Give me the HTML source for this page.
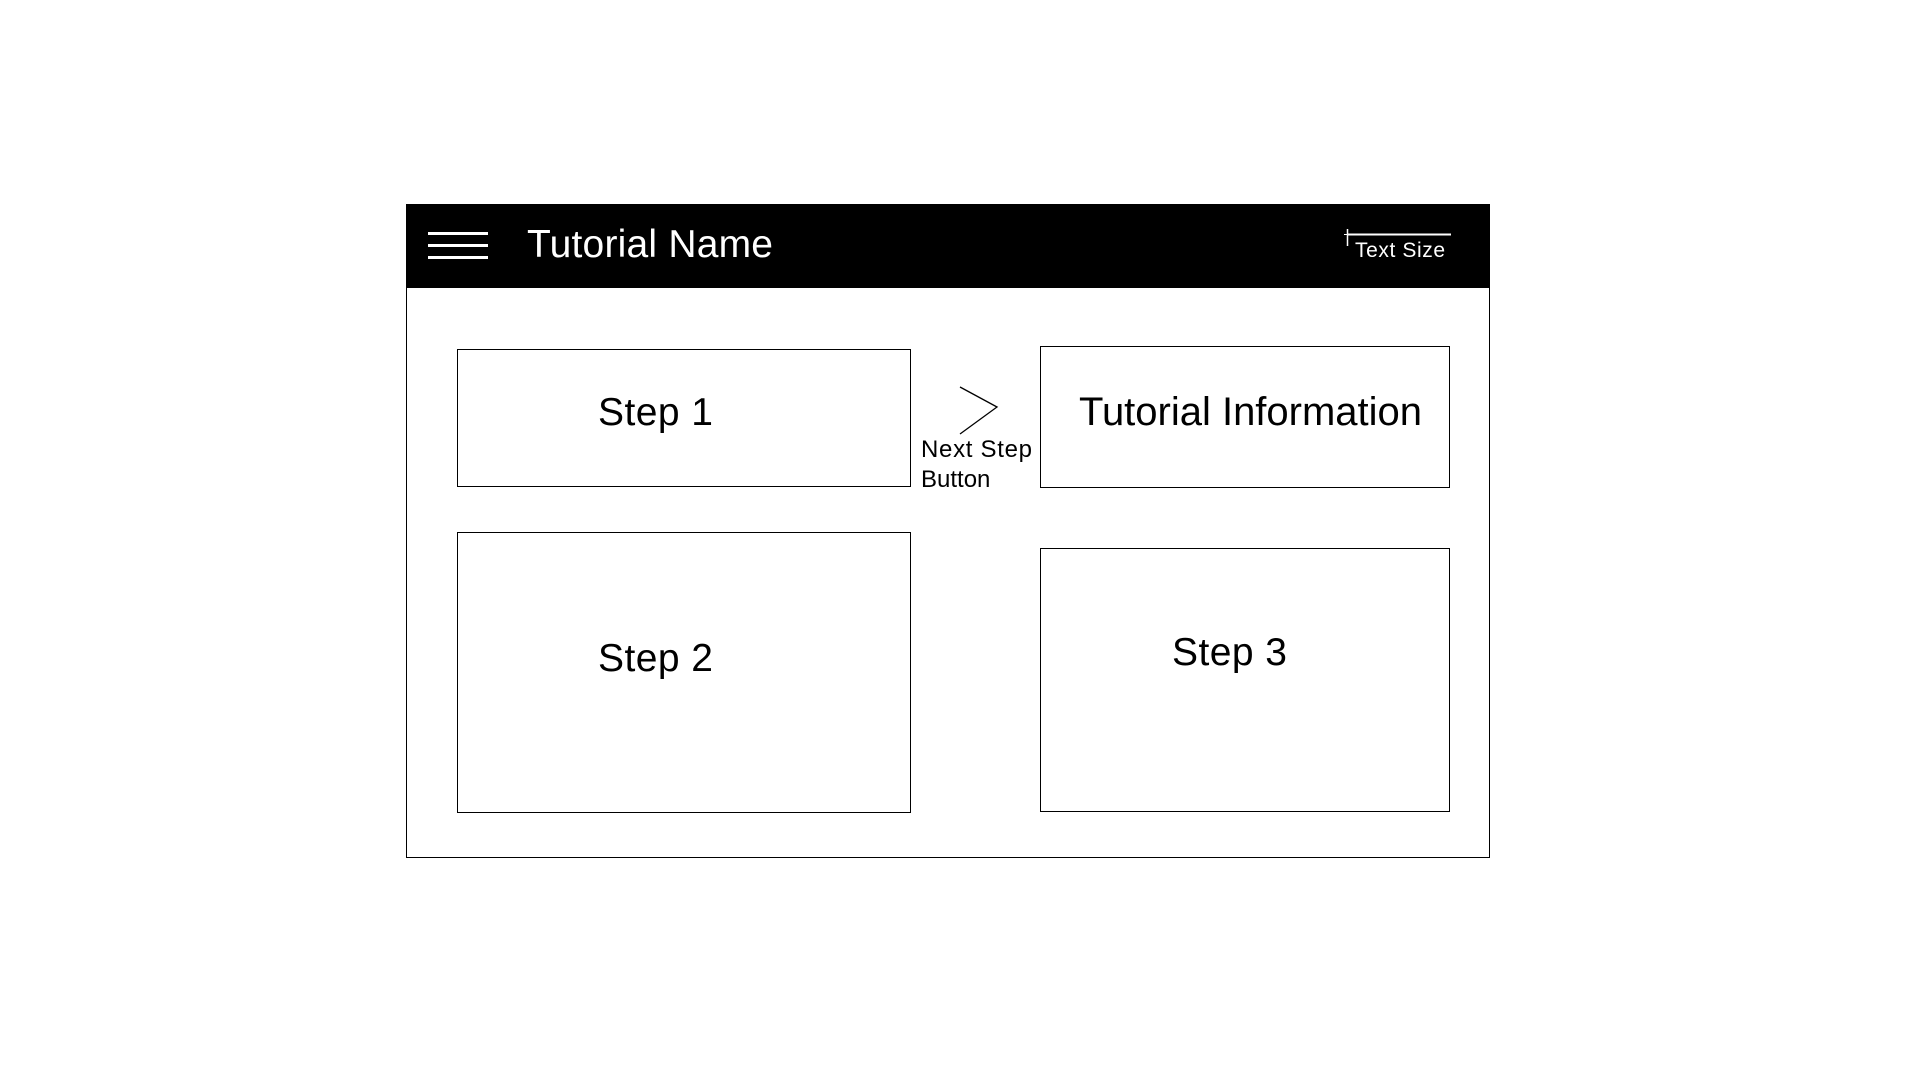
<!DOCTYPE html>
<html><head><meta charset="utf-8"><style>html,body{margin:0;padding:0;background:#fff;width:1920px;height:1080px;overflow:hidden}</style></head>
<body>
<svg width="1920" height="1080" xmlns="http://www.w3.org/2000/svg" font-family="Liberation Sans, Arial, sans-serif">
<rect x="406.5" y="204.5" width="1083" height="653" fill="#fff" stroke="#000" stroke-width="1"/>
<rect x="406" y="204" width="1084" height="84" fill="#000"/>
<rect x="428" y="232" width="60" height="3" fill="#fff"/>
<rect x="428" y="244" width="60" height="3" fill="#fff"/>
<rect x="428" y="256" width="60" height="3" fill="#fff"/>
<text x="527" y="257" font-size="39" fill="#fff" textLength="246">Tutorial Name</text>
<line x1="1348" y1="234.5" x2="1451" y2="234.5" stroke="#fff" stroke-width="2"/>
<line x1="1347.5" y1="229" x2="1347.5" y2="246" stroke="#fff" stroke-width="1.5"/>
<line x1="1344" y1="234.5" x2="1347" y2="234.5" stroke="#fff" stroke-width="1"/>
<text x="1355" y="257" font-size="21" fill="#fff" textLength="90">Text Size</text>
<rect x="457.5" y="349.5" width="453" height="137" fill="none" stroke="#000"/>
<rect x="1040.5" y="346.5" width="409" height="141" fill="none" stroke="#000"/>
<rect x="457.5" y="532.5" width="453" height="280" fill="none" stroke="#000"/>
<rect x="1040.5" y="548.5" width="409" height="263" fill="none" stroke="#000"/>
<polyline points="960,387 997,407 960,434" fill="none" stroke="#000" stroke-width="1.3"/>
<text x="921" y="457" font-size="24" textLength="111">Next Step</text>
<text x="921" y="487" font-size="24">Button</text>
<text x="598" y="425" font-size="39" textLength="115">Step 1</text>
<text x="1079" y="425" font-size="40" textLength="343">Tutorial Information</text>
<text x="598" y="671" font-size="39" textLength="115">Step 2</text>
<text x="1172" y="665" font-size="39" textLength="115">Step 3</text>
</svg>
</body></html>
